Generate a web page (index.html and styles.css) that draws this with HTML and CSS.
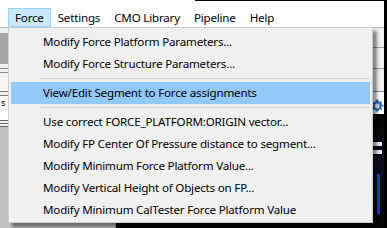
FILE: index.html
```html
<!DOCTYPE html>
<html>
<head>
<meta charset="utf-8">
<link rel="stylesheet" href="styles.css">
</head>
<body>
<div class="screen">
  <div class="menubar">
    <span class="mb-item active">Force</span>
    <span class="mb-item">Settings</span>
    <span class="mb-item">CMO Library</span>
    <span class="mb-item">Pipeline</span>
    <span class="mb-item">Help</span>
  </div>
  <div class="workspace">
    <div class="leftpane">
      <div class="lp-gap"></div>
      <div class="lp-block"></div>
      <div class="lp-gap2"></div>
      <div class="lp-lines"></div>
      <div class="lp-row"></div>
      <div class="lp-lines2"></div>
      <div class="lp-text">s</div>
      <div class="lp-lines3"></div>
      <div class="lp-fill"></div>
    </div>
    <div class="rightpane">
      <div class="toolbar">
        <div class="tb-row"></div>
        <div class="tb-row"></div>
        <div class="tb-row tb-last"></div>
      </div>
      <div class="iconrow">
        <svg class="gear" width="14" height="14" viewBox="0 0 14 14">
          <path d="M7 0.5l1.3 0.2 0.3 1.6 1.2 0.6 1.4-0.9 1 1-0.9 1.4 0.6 1.2 1.6 0.3v1.4l-1.6 0.3-0.6 1.2 0.9 1.4-1 1-1.4-0.9-1.2 0.6-0.3 1.6H5.7l-0.3-1.6-1.2-0.6-1.4 0.9-1-1 0.9-1.4-0.6-1.2-1.6-0.3V6.3l1.6-0.3 0.6-1.2-0.9-1.4 1-1 1.4 0.9 1.2-0.6 0.3-1.6z" fill="#2f6fc0"/>
          <circle cx="7" cy="7" r="2.4" fill="#e8f0fa"/>
        </svg>
      </div>
      <div class="viewport">
        <div class="vp-logo"></div>
        <div class="vp-streak"></div>
      </div>
    </div>
  </div>
  <div class="menu">
    <div class="item">Modify Force Platform Parameters...</div>
    <div class="item">Modify Force Structure Parameters...</div>
    <div class="sep"></div>
    <div class="item hl">View/Edit Segment to Force assignments</div>
    <div class="sep"></div>
    <div class="item">Use correct FORCE_PLATFORM:ORIGIN vector...</div>
    <div class="item">Modify FP Center Of Pressure distance to segment...</div>
    <div class="item">Modify Minimum Force Platform Value...</div>
    <div class="item">Modify Vertical Height of Objects on FP...</div>
    <div class="item">Modify Minimum CalTester Force Platform Value</div>
  </div>
</div>
</body>
</html>
```

FILE: styles.css
```css
* { box-sizing: border-box; margin: 0; padding: 0; }
html, body { width: 387px; height: 228px; overflow: hidden; }
body {
  font-family: "Noto Sans", "Open Sans", sans-serif;
  font-size: 11.6px;
  letter-spacing: -0.2px;
  color: #000;
  background: #000;
}
.screen {
  position: relative;
  width: 387px;
  height: 228px;
  display: flex;
  flex-direction: column;
  border-right: 3px solid #000;
  background: #fff;
}
.menubar {
  height: 28px;
  padding: 8px 0 0 8px;
  display: flex;
  align-items: flex-start;
  background: linear-gradient(to right, #fff 195px, #000 195px) top / 100% 1px no-repeat, #fff;
  border-bottom: 1px solid #b4b4b4;
  flex: none;
}
.mb-item {
  height: 19px;
  line-height: 17px;
  padding: 0 6px;
  border: 1px solid transparent;
  white-space: nowrap;
}
.mb-item.active { background: #cce8ff; border-color: #99d1ff; }

.workspace { flex: 1; display: flex; min-height: 0; }
.leftpane {
  width: 122px;
  display: flex;
  flex-direction: column;
  background: #f0f0f0;
}
.lp-gap { height: 5px; }
.lp-block { height: 31px; background: #a6a6a6; }
.lp-gap2 { height: 4px; }
.lp-lines { height: 5px; border-top: 1px solid #8a8a8a; border-bottom: 1px solid #8a8a8a; }
.lp-row { height: 18px; background: #f4f4f4; }
.lp-lines2 { height: 5px; border-top: 1px solid #7a7a7a; border-bottom: 1px solid #7a7a7a; }
.lp-text { height: 24px; font-size: 9px; line-height: 14px; padding-left: 1px; background: #fff; }
.lp-lines3 { height: 7px; border-top: 1px solid #6a6a6a; border-bottom: 1px solid #6a6a6a; background: linear-gradient(#f0f0f0 2px, #6a6a6a 2px, #6a6a6a 3px, #f0f0f0 3px); }
.lp-fill { flex: 1; background: #c2c2c2; border-right: 1px solid #9a9a9a; }

.rightpane { flex: 1; display: flex; flex-direction: column; }
.toolbar { background: #f0f0f0; }
.tb-row { height: 21px; border-bottom: 1px solid #a0a0a0; }
.tb-row:first-child { height: 20px; }
.tb-last { height: 23px; border-bottom: 1px solid #8c8c8c; box-shadow: 0 3px 0 #fff, 0 4px 0 #8c8c8c; }
.iconrow { height: 22px; padding: 7px 0 0 254px; background: #fff; }
.gear { display: block; }
.viewport {
  flex: 1;
  position: relative;
  background: linear-gradient(#050505 0, #0b1020 40%, #050508 100%);
}
.vp-logo {
  position: absolute;
  left: 256px;
  top: 28px;
  width: 10px;
  height: 12px;
  border-top: 4px solid #e8e8f0;
  border-bottom: 4px solid #e8e8f0;
}
.vp-streak {
  position: absolute;
  left: 261px;
  top: 60px;
  width: 3px;
  height: 40px;
  background: #1f3fd0;
}

.menu {
  position: absolute;
  left: 8px;
  top: 27px;
  width: 365px;
  height: 196px;
  padding: 3px 2px 1px;
  background: #f0f0f0;
  border: 1px solid #cccccc;
  box-shadow: 4px 4px 3px rgba(0, 0, 0, 0.45);
}
.item {
  height: 22px;
  line-height: 22px;
  padding-left: 32px;
  white-space: nowrap;
}
.item.hl { background: #91c9f7; }
.sep { height: 7px; padding-top: 3px; margin-left: 29px; }
.sep::before { content: ""; display: block; height: 1px; background: #d7d7d7; }
```
